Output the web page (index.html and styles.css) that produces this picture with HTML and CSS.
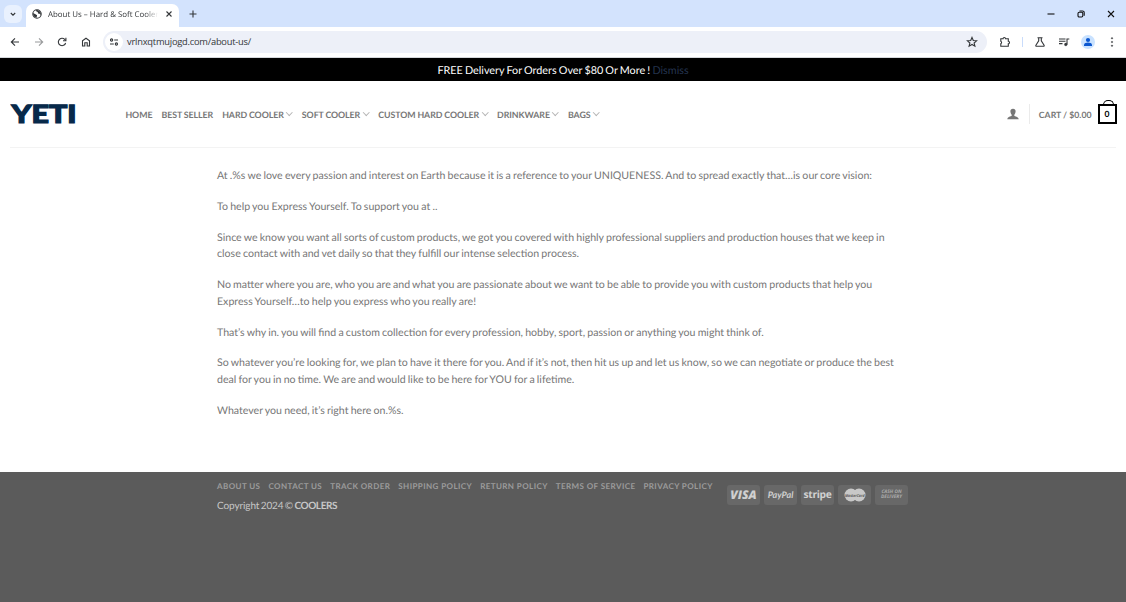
FILE: index.html
```html
<!DOCTYPE html>
<html lang="en">
<head>
    <meta charset="UTF-8">
    <meta name="viewport" content="width=device-width, initial-scale=1.0">
    <link rel="stylesheet" href="styles.css">
    <title>About Us – Hard &amp; Soft Coolers</title>
</head>
<body>
    <!-- browser window -->
    <div class="tabs">
        <div class="tab-search">
            <svg width="8" height="8" viewBox="0 0 8 8"><path d="M1.8 3l2.2 2.2L6.2 3"/></svg>
        </div>
        <div class="tab">
            <svg class="globe" width="10" height="10" viewBox="0 0 10 10"><circle cx="5" cy="5" r="4.2"/><path class="land" d="M1 4l2.5 1.2 1.6 1-.6 2.6C2.500 8.500 1 7 1 4zM4 1l.4 1.600 1.400.5.2 1.300 1.600.4 1.200 1.200c.6-2.500-1.200-5-4.800-5z"/></svg>
            <span class="tab-title">About Us – Hard &amp; Soft Cooler</span>
            <svg width="8" height="8" viewBox="0 0 8 8"><path d="M1.500 1.500l5 5M6.500 1.500l-5 5"/></svg>
        </div>
        <svg class="new-tab" width="10" height="10" viewBox="0 0 10 10"><path d="M5 1.500v7M1.500 5h7"/></svg>
        <div class="window-buttons">
            <svg width="10" height="10" viewBox="0 0 10 10"><path d="M1.500 5h7"/></svg>
            <svg width="10" height="10" viewBox="0 0 10 10"><rect x="2" y="3.200" width="4.800" height="4.800" rx="1.200"/><path d="M3.500 2h3a1.700 1.700 0 0 1 1.700 1.700v3"/></svg>
            <svg width="10" height="10" viewBox="0 0 10 10"><path d="M2 2l6 6M8 2l-6 6"/></svg>
        </div>
    </div>
    <div class="toolbar">
        <div class="tool-nav">
            <svg width="12" height="12" viewBox="0 0 12 12"><path d="M10 6H2.500M6 2.300L2.300 6 6 9.700"/></svg>
            <svg class="off" width="12" height="12" viewBox="0 0 12 12"><path d="M2 6h7.500M6 2.300L9.700 6 6 9.700"/></svg>
            <svg width="12" height="12" viewBox="0 0 12 12"><path d="M9.600 7A3.700 3.700 0 1 1 8.700 3.400L9.700 4.500"/><path d="M9.900 1.800v3H7"/></svg>
            <svg width="12" height="12" viewBox="0 0 12 12"><path d="M2.500 10V4.800L6 2.200l3.500 2.600V10H7.200V6.800H4.800V10z"/></svg>
        </div>
        <div class="address">
            <div class="site-info">
                <svg width="10" height="10" viewBox="0 0 10 10"><circle cx="2.600" cy="3" r="1.100"/><path d="M5.200 3H9M1 7h3.800"/><circle cx="7.400" cy="7" r="1.100"/></svg>
            </div>
            <span class="url">vrlnxqtmujogd.com/about-us/</span>
            <svg class="star" width="12" height="12" viewBox="0 0 12 12"><path d="M6 1.500l1.300 3 3.300.3-2.500 2.200.8 3.200L6 8.500l-2.900 1.700.8-3.200-2.500-2.200 3.300-.3z"/></svg>
        </div>
        <div class="tool-icons">
            <svg width="12" height="12" viewBox="0 0 12 12"><path d="M1.800 2.700h2.300a1.200 1.200 0 0 1 2.400 0h2.800v2.600a1.200 1.200 0 0 1 0 2.400v2.600H1.800V7.700a1.300 1.300 0 0 0 0-2.400z"/></svg>
            <span class="divider"></span>
            <svg width="12" height="12" viewBox="0 0 12 12"><path d="M3.500 1.700h5M4.700 1.700v3.200L1.900 9.200c-.3.600 0 1.100.6 1.100h7c.6 0 .9-.5.6-1.100L7.300 4.900V1.700"/></svg>
            <svg width="12" height="12" viewBox="0 0 12 12"><path d="M1 3h6.500M1 5.300h6.500M1 7.600h3.500M9 8.500V3h2.300"/><circle class="fill" cx="7.800" cy="8.500" r="1.400"/></svg>
            <div class="profile">
                <svg width="12" height="12" viewBox="0 0 12 12"><circle cx="6" cy="4" r="2.100"/><path d="M2 9.900V9c0-1.600 2.300-2.400 4-2.400s4 .8 4 2.400v.9z"/></svg>
            </div>
            <svg width="12" height="12" viewBox="0 0 12 12"><g class="fill"><circle cx="6" cy="2.300" r=".8"/><circle cx="6" cy="6" r=".8"/><circle cx="6" cy="9.700" r=".8"/></g></svg>
        </div>
    </div>

    <!-- store page -->
    <div class="notice">FREE Delivery For Orders Over $80 Or More ! <a href="#">Dismiss</a></div>
    <header class="header">
        <a class="logo" href="#">
            <svg width="68" height="36" viewBox="0 0 68 36"><text x="1.500" y="27" textLength="65" lengthAdjust="spacingAndGlyphs">YETI</text></svg>
        </a>
        <nav class="menu">
            <a href="#">HOME</a>
            <a href="#">BEST SELLER</a>
            <a href="#">HARD COOLER<i></i></a>
            <a href="#">SOFT COOLER<i></i></a>
            <a href="#">CUSTOM HARD COOLER<i></i></a>
            <a href="#">DRINKWARE<i></i></a>
            <a href="#">BAGS<i></i></a>
        </nav>
        <div class="account">
            <svg class="user" width="12" height="12" viewBox="0 0 12 12"><path d="M6 .7c1.900 0 2.700 1.200 2.600 2.800C8.500 5 7.800 6.200 7.300 6.700v1c.8.8 4.300 1 4.400 3.500H.3C.4 8.700 3.900 8.500 4.700 7.700v-1C4.200 6.200 3.500 5 3.400 3.500 3.300 1.900 4.100.7 6 .7z"/></svg>
            <span class="line"></span>
            <a class="cart" href="#">CART / $0.00</a>
            <span class="bag">0</span>
        </div>
    </header>

    <main class="content">
        <p>At .%s we love every passion and interest on Earth because it is a reference to your UNIQUENESS. And to spread exactly that…is our core vision:</p>
        <p>To help you Express Yourself. To support you at ..</p>
        <p>Since we know you want all sorts of custom products, we got you covered with highly professional suppliers and production houses that we keep in<br>close contact with and vet daily so that they fulfill our intense selection process.</p>
        <p>No matter where you are, who you are and what you are passionate about we want to be able to provide you with custom products that help you<br>Express Yourself…to help you express who you really are!</p>
        <p>That’s why in. you will find a custom collection for every profession, hobby, sport, passion or anything you might think of.</p>
        <p>So whatever you’re looking for, we plan to have it there for you. And if it’s not, then hit us up and let us know, so we can negotiate or produce the best<br>deal for you in no time. We are and would like to be here for YOU for a lifetime.</p>
        <p>Whatever you need, it’s right here on.%s.</p>
    </main>

    <footer class="footer">
        <div class="footer-text">
            <nav class="footer-menu">
                <a href="#">ABOUT US</a>
                <a href="#">CONTACT US</a>
                <a href="#">TRACK ORDER</a>
                <a href="#">SHIPPING POLICY</a>
                <a href="#">RETURN POLICY</a>
                <a href="#">TERMS OF SERVICE</a>
                <a href="#">PRIVACY POLICY</a>
            </nav>
            <div class="copyright">Copyright 2024 © <strong>COOLERS</strong></div>
        </div>
        <div class="payments">
            <span class="card visa">VISA</span>
            <span class="card paypal">PayPal</span>
            <span class="card stripe">stripe</span>
            <span class="card">
                <svg width="24" height="14" viewBox="0 0 24 14"><circle cx="8" cy="7" r="6.500"/><circle cx="16" cy="7" r="6.500"/><text x="2" y="8.700" textLength="19.500" lengthAdjust="spacingAndGlyphs">MasterCard</text></svg>
            </span>
            <span class="card cash">CASH ON<br>DELIVERY</span>
        </div>
    </footer>
</body>
</html>
```
FILE: styles.css
```css
*{
    margin: 0;
    padding: 0;
    box-sizing: border-box;
}
body{
    font-family: Lato, sans-serif;
    font-size: 10.6px;
    text-rendering: geometricPrecision;
    color: #777;
    background-color: #fff;
    height: 602px;
    display: flex;
    flex-direction: column;
    overflow: hidden;
}
a{
    color: inherit;
    text-decoration: none;
}
svg{
    display: block;
    flex: none;
}

/* browser */
.tabs svg,
.toolbar svg{
    fill: none;
    stroke: #333639;
    stroke-width: 1.1;
}
.tabs{
    height: 27px;
    flex: none;
    display: flex;
    align-items: center;
    background-color: #d3e3fd;
    padding-left: 4px;
}
.tab-search{
    width: 18px;
    height: 18px;
    border-radius: 6px;
    background-color: #e9f1fe;
    display: flex;
    align-items: center;
    justify-content: center;
}
.tab{
    width: 153px;
    height: 23px;
    align-self: flex-end;
    margin-left: 4px;
    padding: 0 6px 3px;
    display: flex;
    align-items: center;
    background-color: #fff;
    border-radius: 7px 7px 0 0;
}
.tab .land{
    fill: #333639;
    stroke: none;
}
.tab-title{
    width: 110px;
    margin: 0 7px 0 6px;
    padding-top: 1px;
    font-family: "Open Sans", sans-serif;
    font-size: 7.9px;
    color: #333639;
    white-space: nowrap;
    mask-image: linear-gradient(to right, #000 88%, transparent);
}
.new-tab{
    margin-left: 9px;
}
.window-buttons{
    display: flex;
    gap: 20px;
    margin-left: auto;
    margin-right: 10px;
}
.tabs .window-buttons svg{
    stroke: #111;
}
.toolbar{
    height: 31px;
    flex: none;
    display: flex;
    align-items: center;
    padding: 0 9px;
    border-bottom: 1px solid #d5d8dc;
}
.tool-nav{
    display: flex;
    gap: 11.7px;
}
.tool-nav .off{
    opacity: .5;
}
.address{
    width: 884px;
    height: 22px;
    flex: none;
    margin-left: 11px;
    padding: 0 9px 0 2px;
    display: flex;
    align-items: center;
    border-radius: 11px;
    background-color: #edf0f8;
}
.site-info{
    width: 18px;
    height: 18px;
    border-radius: 50%;
    background-color: #fff;
    display: flex;
    align-items: center;
    justify-content: center;
}
.url{
    margin-left: 4px;
    padding-bottom: 1px;
    font-family: "Open Sans", sans-serif;
    font-size: 9.3px;
    letter-spacing: -.22px;
    color: #333639;
}
.star{
    margin-left: auto;
}
.tool-icons{
    display: flex;
    align-items: center;
    margin-left: 12px;
}
.divider{
    width: 1px;
    height: 10px;
    background-color: #c9dcfb;
    margin: 0 11px;
}
.profile{
    width: 14px;
    height: 14px;
    margin: 0 11px;
    border-radius: 50%;
    background-color: #c9e2ff;
    display: flex;
    align-items: center;
    justify-content: center;
}
.divider + svg{
    margin-right: 12px;
}
.toolbar .profile svg{
    fill: #0b57d0;
    stroke: none;
}
.toolbar .fill{
    fill: #333639;
    stroke: #333639;
    stroke-width: .3;
}

/* store */
.notice{
    height: 23px;
    flex: none;
    line-height: 25px;
    background-color: #000;
    color: #fff;
    text-align: center;
    font-size: 10.8px;
    word-spacing: -.6px;
}
.notice a{
    color: #24344f;
}
.header{
    height: 67px;
    flex: none;
    display: flex;
    align-items: center;
    margin: 0 10px;
    border-bottom: 1px solid #f3f3f3;
}
.logo text{
    font-family: Lato, sans-serif;
    font-weight: 900;
    font-size: 25px;
    fill: #07294a;
    stroke: #07294a;
    stroke-width: 1.2;
}
.menu{
    display: flex;
    gap: 9px;
    margin-left: 47.4px;
    font-size: 8.8px;
    letter-spacing: -.06px;
    word-spacing: -.2px;
    font-weight: 700;
    white-space: nowrap;
}
.menu a{
    display: flex;
    align-items: center;
}
.menu i{
    width: 4.5px;
    height: 4.5px;
    margin: -3px 1px 0 3.5px;
    border-right: 1px solid #b5b5b5;
    border-bottom: 1px solid #b5b5b5;
    transform: rotate(45deg);
}
.account{
    display: flex;
    align-items: center;
    margin-left: auto;
    margin-right: -.5px;
    font-weight: 700;
}
.user{
    fill: #777;
}
.line{
    width: 1px;
    height: 20px;
    background-color: #ebebeb;
    margin: 0 9px 0 10px;
}
.cart{
    font-size: 8.7px;
}
.bag{
    position: relative;
    width: 19px;
    height: 20px;
    margin-left: 6px;
    border: 2px solid #000;
    color: #000;
    font-size: 8.5px;
    line-height: 16px;
    text-align: center;
}
.bag::before{
    content: "";
    position: absolute;
    top: -6px;
    left: 3px;
    width: 9px;
    height: 5px;
    border: 1.5px solid #000;
    border-bottom: none;
    border-radius: 5px 5px 0 0;
}
.content{
    height: 323.5px;
    flex: none;
    padding: 20px 0 0 217px;
    line-height: 16.7px;
    word-spacing: -.52px;
    white-space: nowrap;
}
.content p{
    margin-bottom: 14.1px;
}
.footer{
    flex: 1;
    display: flex;
    padding: 8.4px 0 0 217px;
    background-color: #5b5b5b;
    color: #c8c8c8;
}
.footer-text{
    width: 510px;
}
.footer-menu{
    display: flex;
    gap: 8px;
    font-size: 8px;
    font-weight: 700;
    line-height: 12px;
    letter-spacing: .42px;
    color: #9b9b9b;
    white-space: nowrap;
}
.copyright{
    margin-top: 5.8px;
    font-size: 10px;
    line-height: 16px;
    letter-spacing: -.1px;
    word-spacing: -1.1px;
}
.copyright strong{
    letter-spacing: -.4px;
}
.payments{
    display: flex;
    gap: 4px;
    padding-top: 5px;
}
.card{
    width: 33px;
    height: 20px;
    border-radius: 3px;
    background-color: #686868;
    color: #d0d0d0;
    display: flex;
    align-items: center;
    justify-content: center;
    font-family: "Open Sans", sans-serif;
    font-weight: 700;
}
.visa{
    font-size: 12px;
    font-style: italic;
    font-weight: 800;
}
.paypal{
    font-family: Lato, sans-serif;
    font-size: 9px;
    font-style: italic;
}
.stripe{
    font-size: 10.3px;
    letter-spacing: -.3px;
}
.card circle{
    fill: #c8c8c8;
}
.card text{
    font-size: 4px;
    font-style: italic;
    fill: #5b5b5b;
}
.cash{
    font-size: 4.8px;
    font-style: italic;
    line-height: 4.8px;
    text-align: center;
    color: #aaa;
}
```
